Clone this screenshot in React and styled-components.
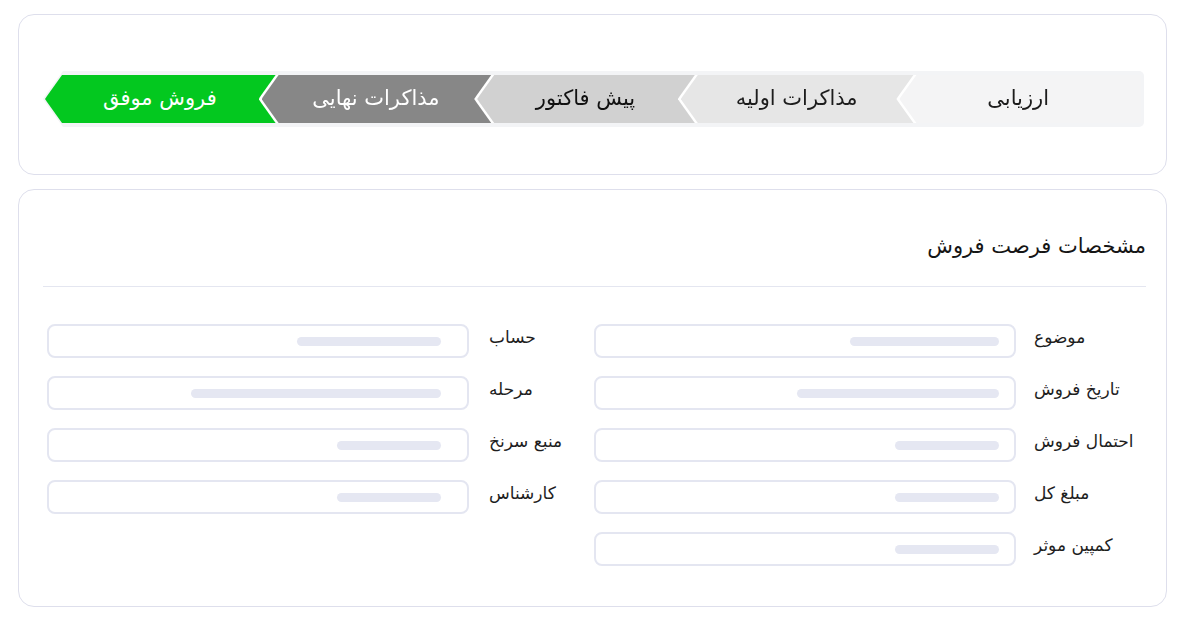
import React from 'react';
import styled, { createGlobalStyle } from 'styled-components';

const GlobalStyle = createGlobalStyle`
  body {
    margin: 0;
    background: #ffffff;
    font-family: "DejaVu Sans", sans-serif;
    color: #1c1c1c;
  }
`;

const steps = [
    { title: 'ارزیابی', w: 242, bg: '#f4f4f5', color: '#1c1c1c' },
    { title: 'مذاکرات اولیه', w: 236, bg: '#e6e6e6', color: '#1c1c1c' },
    { title: 'پیش فاکتور', w: 221, bg: '#d1d1d1', color: '#111111' },
    { title: 'مذاکرات نهایی', w: 233, bg: '#878787', color: '#ffffff' },
    { title: 'فروش موفق', w: 234, bg: '#03c81f', color: '#ffffff' },
];

const rightFields = [
    { label: 'موضوع', bar: 149 },
    { label: 'تاریخ فروش', bar: 202 },
    { label: 'احتمال فروش', bar: 104 },
    { label: 'مبلغ کل', bar: 104 },
    { label: 'کمپین موثر', bar: 104 },
];

const leftFields = [
    { label: 'حساب', bar: 144 },
    { label: 'مرحله', bar: 250 },
    { label: 'منبع سرنخ', bar: 104 },
    { label: 'کارشناس', bar: 104 },
];

const App = () => {
    return (
        <Page>
            <GlobalStyle />
            <Card $pad="56px 22px 47px 24px">
                <Track>
                    {steps.map((s, i) => (
                        <Step key={s.title} $w={s.w} $z={steps.length - i} $stroke={i !== steps.length - 1}>
                            <StepShape $bg={s.bg} $color={s.color}>
                                {s.title}
                            </StepShape>
                        </Step>
                    ))}
                </Track>
            </Card>

            <Card $pad="0 20px 40px 24px">
                <Header>
                    <Title>مشخصات فرصت فروش</Title>
                </Header>
                <Columns>
                    <Column $width={552}>
                        {rightFields.map((f) => (
                            <Field key={f.label} $gap={18}>
                                <Label>{f.label}</Label>
                                <Input $inset={15}>
                                    <Bar style={{ width: f.bar }} />
                                </Input>
                            </Field>
                        ))}
                    </Column>
                    <Column $width={547}>
                        {leftFields.map((f) => (
                            <Field key={f.label} $gap={20}>
                                <Label>{f.label}</Label>
                                <Input $inset={26}>
                                    <Bar style={{ width: f.bar }} />
                                </Input>
                            </Field>
                        ))}
                    </Column>
                </Columns>
            </Card>
        </Page>
    );
};

const Page = styled.div`
  direction: rtl;
  display: flex;
  flex-direction: column;
  gap: 14px;
  padding: 14px 17px 20px 18px;
`;

const Card = styled.div`
  border: 1px solid #dedfec;
  border-radius: 16px;
  background: #fff;
  padding: ${(p) => p.$pad};
`;

const Track = styled.div`
  display: flex;
  height: 48px;
  padding: 4px 3px 4px 2px;
  background: #f3f4f6;
  border-radius: 5px;
  clip-path: polygon(20px 0, 100% 0, 100% 100%, 20px 100%, 2px calc(50% + 3px), 0 50%, 2px calc(50% - 3px));
`;

const Step = styled.div`
  position: relative;
  z-index: ${(p) => p.$z};
  flex: ${(p) => p.$w} 1 0px;
  display: flex;
  filter: ${(p) => (p.$stroke ? 'drop-shadow(-3px 0 0 #ffffff)' : 'none')};

  &:not(:last-child) {
    margin-left: -17px;
  }
`;

const StepShape = styled.div`
  flex: 1;
  display: flex;
  align-items: center;
  justify-content: center;
  padding-right: 4px;
  padding-bottom: 3px;
  background: ${(p) => p.$bg};
  color: ${(p) => p.$color};
  font-size: 21px;
  clip-path: polygon(17px 0, 100% 0, 100% 100%, 17px 100%, 2px calc(50% + 3px), 0 50%, 2px calc(50% - 3px));
`;

const Header = styled.div`
  display: flex;
  align-items: center;
  height: 80px;
  padding-top: 16px;
  border-bottom: 1px solid #e4e6f0;
`;

const Title = styled.h2`
  margin: 0;
  font-size: 21px;
  font-weight: 500;
  color: #151515;
`;

const Columns = styled.div`
  display: flex;
  padding-top: 37px;
`;

const Column = styled.div`
  width: ${(p) => p.$width}px;
  display: flex;
  flex-direction: column;
  gap: 18px;
`;

const Field = styled.div`
  display: flex;
  align-items: flex-start;
  gap: ${(p) => p.$gap}px;
`;

const Label = styled.div`
  flex: 1;
  text-align: left;
  font-size: 17px;
  line-height: 26px;
  color: #1e1e1e;
`;

const Input = styled.div`
  box-sizing: border-box;
  width: 422px;
  height: 34px;
  border: 2px solid #e4e6f1;
  border-radius: 8px;
  display: flex;
  align-items: center;
  padding-right: ${(p) => p.$inset}px;
`;

const Bar = styled.div`
  height: 9px;
  border-radius: 5px;
  background: #e5e7f2;
`;

export default App;
